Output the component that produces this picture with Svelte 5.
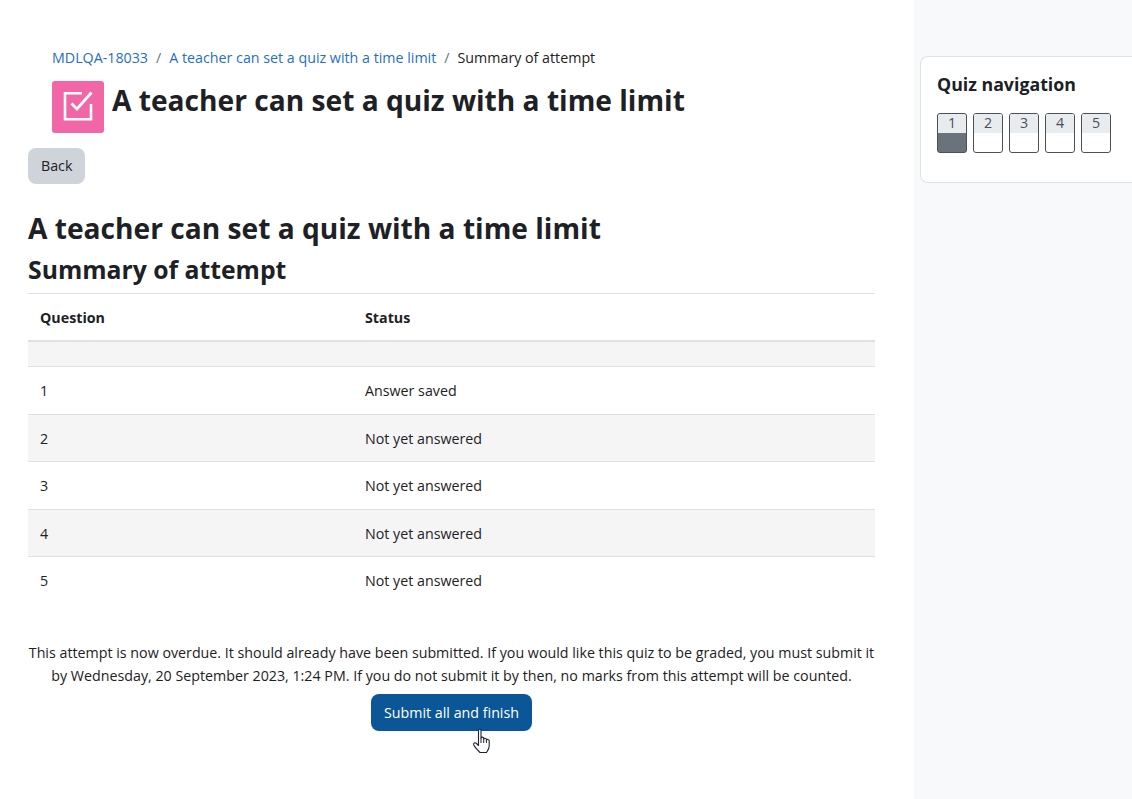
<script>
  const rows = [
    { n: 1, status: 'Answer saved' },
    { n: 2, status: 'Not yet answered' },
    { n: 3, status: 'Not yet answered' },
    { n: 4, status: 'Not yet answered' },
    { n: 5, status: 'Not yet answered' }
  ];
  const pages = [1, 2, 3, 4, 5];
</script>

<div class="page">
  <main class="content">
    <nav class="breadcrumb">
      <a href="#top">MDLQA-18033</a>
      <span class="sep">/</span>
      <a href="#top">A teacher can set a quiz with a time limit</a>
      <span class="sep">/</span>
      <span>Summary of attempt</span>
    </nav>
    <div class="page-title">
      <div class="activity-icon">
        <svg width="52" height="52" viewBox="0 0 52 52" fill="none" stroke="#fff" stroke-width="2.6">
          <path d="M39 23V38.2H13V12.3H30" />
          <path d="M19.5 22.5L25 28L39.5 11.5" stroke-width="2.8" />
        </svg>
      </div>
      <h1>A teacher can set a quiz with a time limit</h1>
    </div>
    <button class="btn back">Back</button>

    <h2>A teacher can set a quiz with a time limit</h2>
    <h3>Summary of attempt</h3>

    <table>
      <thead>
        <tr>
          <th class="col-q">Question</th>
          <th>Status</th>
        </tr>
      </thead>
      <tbody>
        <tr class="spacer"><td colspan="2"></td></tr>
        {#each rows as row, i}
          <tr class:odd={i % 2 === 1}>
            <td>{row.n}</td>
            <td>{row.status}</td>
          </tr>
        {/each}
      </tbody>
    </table>

    <p class="notice">
      This attempt is now overdue. It should already have been submitted. If you would like this quiz to be graded, you must submit it by Wednesday, 20 September 2023, 1:24 PM. If you do not submit it by then, no marks from this attempt will be counted.
    </p>
    <div class="submit-wrap">
      <button class="btn submit">Submit all and finish</button>
      <svg class="cursor" width="19" height="26" viewBox="0 0 19 26">
        <path
          d="M6.5 2.5C6.5.8 9 .8 9 2.5V10C9.3 8.8 11.5 8.8 11.7 10.2V11C12 10 14.2 10 14.4 11.3V12C14.8 11 17 11.2 17.2 12.8V18C17.2 20.5 16 22 14.5 24.5H8C6 22.5 3 19.5 1.8 17C1 15 3 14 4.5 15.5L6.5 17.5Z"
          fill="#fff"
          stroke="#1f2430"
          stroke-width="1.1"
          stroke-linejoin="round"
        />
        <path d="M9 10V15M11.7 11V15M14.4 12V15" stroke="#1f2430" stroke-width="1" fill="none" />
      </svg>
    </div>
  </main>

  <aside class="sidebar">
    <section class="block">
      <h5>Quiz navigation</h5>
      <div class="qn-buttons">
        {#each pages as p, i}
          <div class="qn" class:current={i === 0}>
            <span class="qn-num">{p}</span>
          </div>
        {/each}
      </div>
    </section>
  </aside>
</div>

<style>
  :global(body) {
    margin: 0;
    background: #fff;
    color: #1d2125;
    font-family: "Open Sans", "Noto Sans", sans-serif;
    overflow: hidden;
  }

  .page {
    display: flex;
    height: 799px;
  }

  .content {
    width: 847px;
    padding: 47px 39px 0 28px;
    flex-shrink: 0;
  }

  .breadcrumb {
    padding-left: 24px;
    display: flex;
    gap: 8px;
    font-size: 14.25px;
    line-height: 21px;
  }

  .breadcrumb a {
    color: #1f6fc4;
    text-decoration: none;
  }

  .sep {
    color: #6a737b;
  }

  .page-title {
    display: flex;
    padding-left: 24px;
    margin-top: 13px;
    height: 52px;
  }

  .activity-icon {
    width: 52px;
    height: 52px;
    background: #f066a6;
    border-radius: 3px;
  }

  h1 {
    margin: 0 0 0 8px;
    font-size: 28.15px;
    line-height: 38px;
    font-weight: 700;
  }

  .btn {
    display: block;
    border: none;
    font-family: inherit;
    font-size: 14.25px;
    line-height: 21px;
    border-radius: 8px;
    padding: 8px 13px;
  }

  .back {
    margin-top: 15px;
    background: #ced4da;
    color: #1d2125;
    line-height: 20px;
  }

  h2 {
    margin: 25px 0 0;
    font-size: 28.15px;
    line-height: 38px;
    font-weight: 700;
  }

  h3 {
    margin: 6px 0 0;
    font-size: 24.75px;
    line-height: 34px;
    font-weight: 700;
  }

  table {
    width: 100%;
    margin-top: 6px;
    border-collapse: collapse;
    font-size: 14.25px;
  }

  th {
    text-align: left;
    font-weight: 700;
    line-height: 21px;
    padding: 13px 12px 12px;
    border-top: 1px solid #dee2e6;
    border-bottom: 2px solid #dee2e6;
  }

  .col-q {
    width: 301px;
  }

  td {
    line-height: 21px;
    padding: 13px 12px 12.5px;
    border-bottom: 1px solid #dee2e6;
  }

  tr:last-child td {
    border-bottom: none;
  }

  .spacer td {
    height: 24px;
    padding: 0;
    background: #f5f5f5;
  }

  .odd td {
    background: #f5f5f5;
  }

  .notice {
    margin: 37px 0 0;
    text-align: center;
    font-size: 14.25px;
    line-height: 23px;
  }

  .submit-wrap {
    position: relative;
    display: flex;
    justify-content: center;
    margin-top: 7px;
  }

  .submit {
    background: #0a5696;
    color: #fff;
  }

  .cursor {
    position: absolute;
    left: 444px;
    top: 34px;
  }

  .sidebar {
    flex: 1;
    background: #f8f9fa;
    padding: 56px 0 0 6px;
  }

  .block {
    background: #fff;
    border: 1px solid #dee2e6;
    border-right: none;
    border-radius: 8px 0 0 8px;
    height: 127px;
    box-sizing: border-box;
    padding: 15px 16px;
  }

  h5 {
    margin: 0;
    font-size: 17.75px;
    line-height: 24px;
    font-weight: 700;
  }

  .qn-buttons {
    display: flex;
    gap: 6px;
    margin-top: 17px;
  }

  .qn {
    width: 30px;
    height: 40px;
    box-sizing: border-box;
    border: 1px solid #495057;
    border-radius: 3px;
    background: #fff;
    overflow: hidden;
    text-align: center;
    font-size: 14.25px;
    color: #495057;
  }

  .qn.current {
    background: #6a737b;
  }

  .qn-num {
    display: block;
    height: 19px;
    line-height: 18px;
    background: #e9ecef;
  }
</style>
